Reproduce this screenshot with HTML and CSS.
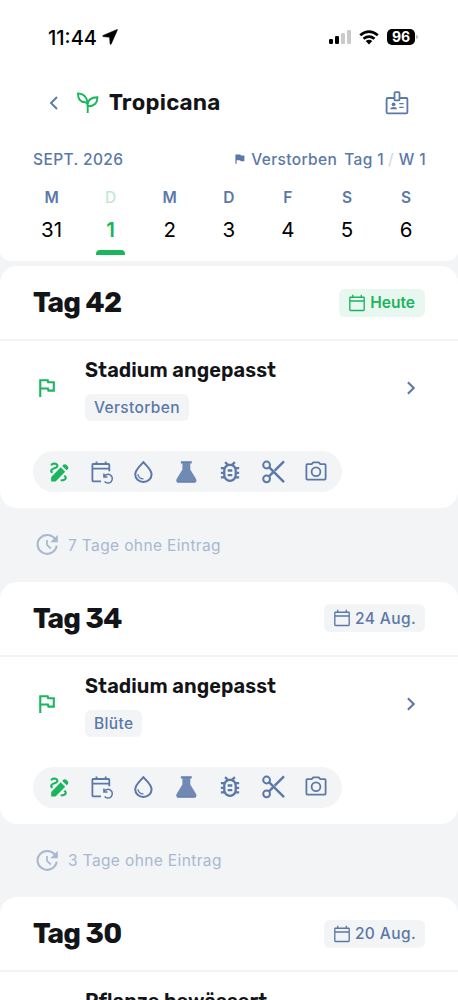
FILE: index.html
```
<!DOCTYPE html>
<html lang="de">
<head>
<meta charset="utf-8">
<meta name="viewport" content="width=device-width">
<title>Tropicana</title>
<link rel="stylesheet" href="styles.css">
</head>
<body>
<svg class="defs" aria-hidden="true">
  <symbol id="flag" viewBox="0 0 24 24"><path d="M12.36 6L12.76 8H18V14H14.64L14.24 12H7V6H12.36M14 4H5V21H7V14H12.6L13 16H20V6H14.4Z" fill="currentColor"/></symbol>
  <symbol id="right" viewBox="0 0 24 24"><path d="M8.9 6.2l5.8 5.8-5.8 5.8" fill="none" stroke="currentColor" stroke-width="2.1"/></symbol>
  <symbol id="calendar" viewBox="0 0 18 18"><path d="M2 3.2h13.6q.6 0 .6.6v12q0 .7-.7.7H2.5q-.7 0-.7-.7v-12q0-.6.6-.6M2 7h14M4.7.8v2.4M13.3.8v2.4" fill="none" stroke="currentColor" stroke-width="1.35"/></symbol>
  <symbol id="draw" viewBox="0 .5 23 23"><path fill="currentColor" d="M18.85 10.39l1.06-1.06c.78-.78.78-2.05 0-2.83L18.5 5.09c-.78-.78-2.05-.78-2.83 0l-1.06 1.06 4.24 4.24zM13.19 7.56L4 16.76V21h4.24l9.19-9.19-4.24-4.25zM19 17.5c0 2.19-2.54 3.5-5 3.5-.55 0-1-.45-1-1s.45-1 1-1c1.54 0 3-.73 3-1.5 0-.47-.48-.87-1.23-1.2l1.48-1.48c1.07.63 1.75 1.47 1.75 2.68zM4.58 13.35C3.61 12.79 3 12.06 3 11c0-1.8 1.89-2.63 3.56-3.36C7.59 7.18 9 6.56 9 6c0-.41-.78-1-2-1-1.26 0-1.8.61-1.83.64-.35.41-.98.46-1.4.12-.41-.34-.49-.95-.15-1.38C3.73 4.24 4.76 3 7 3s4 1.32 4 3c0 1.87-1.93 2.72-3.64 3.47C6.42 9.88 5 10.5 5 11c0 .31.43.6 1.07.86l-1.49 1.49z"/></symbol>
  <symbol id="schedule" viewBox="0 0 24 24"><g fill="none" stroke="currentColor"><path stroke-width="1.8" d="M11 21.3H3.2q-.8 0-.8-.8V4.8q0-.8.8-.8h15.3q.8 0 .8.8v6.4M2.6 8.7h16.7M6.5 1.5V4M15.7 1.5V4"/><path stroke-width="1.5" d="M14.1 16.5a4.4 4.4 0 1 1 .5 5.1M13.9 13.6v3.5h3.6"/></g></symbol>
  <symbol id="drop" viewBox="0 0 24 24"><g fill="none" stroke="currentColor"><path stroke-width="2" d="M10.4 2.2C7 6 2.2 10 2.2 14.3a8.2 7.6 0 0 0 16.4 0C18.6 10 13.8 6 10.4 2.2z"/><path stroke-width="1.4" d="M5 14.2q.4 4.4 5.5 4.7"/></g></symbol>
  <symbol id="flask" viewBox="0 0 24 24"><path fill="currentColor" fill-opacity=".86" d="M5.9 1.5h10.8v2.1h-1.4v6l5.8 9.5q1.3 3.2-1.6 3.4H3.2q-2.9-.2-1.6-3.4l5.8-9.5v-6H5.9z"/><path fill="none" stroke="currentColor" d="M5.9 2h10.8M2 22h18.6"/></symbol>
  <symbol id="bug" viewBox="1.5 1.8 21 21"><path fill="currentColor" fill-rule="evenodd" d="M20,8H17.19C16.74,7.2 16.12,6.5 15.37,6L17,4.41L15.59,3L13.42,5.17C12.96,5.06 12.5,5 12,5C11.5,5 11.05,5.06 10.59,5.17L8.41,3L7,4.41L8.62,6C7.87,6.5 7.26,7.21 6.81,8H4V10H6.09C6.03,10.33 6,10.66 6,11V12H4V14H6V15C6,15.34 6.03,15.67 6.09,16H4V18H6.81C8.47,20.87 12.14,21.84 15,20.18C15.91,19.66 16.67,18.9 17.19,18H20V16H17.91C17.97,15.67 18,15.34 18,15V14H20V12H18V11C18,10.66 17.97,10.33 17.91,10H20V8M16,15A4,4 0 0,1 12,19A4,4 0 0,1 8,15V11A4,4 0 0,1 12,7A4,4 0 0,1 16,11V15M14,10V12H10V10H14M10,14H14V16H10V14Z"/></symbol>
  <symbol id="cut" viewBox="0 0 24 24"><g fill="none" stroke="currentColor"><circle cx="5.6" cy="5" r="3.4" stroke-width="2"/><circle cx="5.6" cy="18.8" r="3.4" stroke-width="2"/><path stroke-width="2.4" d="M8 7.2l15 15M8 16.4l4-4M13.7 10.6L23 1.4"/></g></symbol>
  <symbol id="camera" viewBox="0 0 24 24"><g fill="none" stroke="currentColor" stroke-width="1.8"><path d="M3.4 4.2h4.3l1.6-1.9h5.4l1.6 1.9h4.3q1 0 1 1v13.4q0 1-1 1H3.4q-1 0-1-1V5.2q0-1 1-1z"/><circle cx="12" cy="11.8" r="4.4"/></g></symbol>
  <symbol id="update" viewBox="0 0 24 24"><g fill="none" stroke="currentColor"><path stroke-width="2.1" d="M20.4 6.5A9.6 9.4 0 1 0 21.7 12.7"/><path stroke-width="1.7" d="M12 6.9V12l3.8 3.5"/></g><path fill="currentColor" d="M22.8 1.7v7.5h-7.5z"/></symbol>
</svg>

<header class="top">
  <div class="status">
    <span class="clock">11:44</span>
    <svg class="location" viewBox="0 0 16 16"><path d="M15.3 1.2Q15.7.2 14.6.7L1 6.5Q0 7.2 1.1 7.6l6.5.6.5 6.7q.5 1.1 1.1 0z" stroke="#000" stroke-width=".6"/></svg>
    <svg class="signal" viewBox="0 0 23 16"><rect y="10" width="4" height="5" rx="1.2"/><rect x="6" y="7" width="4" height="8" rx="1.2"/><g fill="#cacaca"><rect x="12" y="4" width="4" height="11" rx="1.2"/><rect x="18" y="1" width="4" height="14" rx="1.2"/></g></svg>
    <svg class="wifi" viewBox="0 0 20 15"><g fill="none" stroke="#000" stroke-width="2.7"><path d="M1.2 5.2Q10-2.1 18.8 5.2M4.5 8.7q5.5-4.3 11 0"/></g><path d="M6.7 11q3.3-2.5 6.6 0L10 14.5z"/></svg>
    <span class="battery">96</span><i class="nub"></i>
  </div>
  <div class="title">
    <svg class="back" viewBox="0 0 12 16"><path d="M9 2L3 8l6 6" fill="none" stroke="currentColor" stroke-width="1.9"/></svg>
    <svg class="plant" viewBox="0 0 22 22"><g fill="none" stroke="currentColor" stroke-width="1.9"><path d="M10.7 21V12.8M10.6 12.6C10.8 7.7 15 5.4 20.4 5.3 20.6 11 17 14.4 10.8 14.3M10.4 9.7C9.4 4.5 6 1.8 1.1 1.4 .8 6.8 3.2 10.1 8.6 10.3M8.6 10.3q2.1.7 2.1 4"/></g></svg>
    <h1>Tropicana</h1>
    <svg class="badge" viewBox="0 0 24 24"><g fill="none" stroke="currentColor" stroke-width="1.8"><path d="M9.4 7H2.8q-1.2 0-1.2 1.2v13q0 1.2 1.2 1.2h18.4q1.2 0 1.2-1.2v-13Q22.4 7 21.2 7h-6.6"/><rect x="9.5" y="1.2" width="5" height="8.2" rx="1"/><path stroke-width="1.3" d="M14.3 12.7h4.3M14.3 16.3h4.3"/></g><circle cx="8.6" cy="13.3" r="1.9" fill="currentColor"/><path d="M5.2 18.2q.3-2.1 3.4-2.1t3.4 2.1z" fill="currentColor"/></svg>
  </div>
  <div class="period">
    <span class="month">SEPT. 2026</span>
    <svg class="miniflag" viewBox="0 0 10 10"><path fill="currentColor" d="M.4.5h5l.5 1h3.5v5.7H5.6l-.4-1H1.6v3.6H.4z"/></svg>
    <span class="stage">Verstorben</span><span class="day">Tag 1</span><span class="slash">/</span><span class="week">W 1</span>
  </div>
  <div class="days">
    <div><b>M</b><span>31</span></div>
    <div class="active"><b>D</b><span>1</span></div>
    <div><b>M</b><span>2</span></div>
    <div><b>D</b><span>3</span></div>
    <div><b>F</b><span>4</span></div>
    <div><b>S</b><span>5</span></div>
    <div><b>S</b><span>6</span></div>
  </div>
</header>

<main>
  <section class="card">
    <div class="head"><h2>Tag 42</h2><span class="date today"><svg><use href="#calendar"/></svg>Heute</span></div>
    <div class="entry"><svg class="flag"><use href="#flag"/></svg><div class="info"><h3>Stadium angepasst</h3><span class="tag">Verstorben</span></div><svg class="more"><use href="#right"/></svg></div>
    <div class="tools"><svg class="on"><use href="#draw"/></svg><svg><use href="#schedule"/></svg><svg><use href="#drop"/></svg><svg><use href="#flask"/></svg><svg><use href="#bug"/></svg><svg><use href="#cut"/></svg><svg><use href="#camera"/></svg></div>
  </section>
  <p class="gap"><svg><use href="#update"/></svg>7 Tage ohne Eintrag</p>
  <section class="card">
    <div class="head"><h2>Tag 34</h2><span class="date"><svg><use href="#calendar"/></svg>24 Aug.</span></div>
    <div class="entry"><svg class="flag"><use href="#flag"/></svg><div class="info"><h3>Stadium angepasst</h3><span class="tag">Blüte</span></div><svg class="more"><use href="#right"/></svg></div>
    <div class="tools"><svg class="on"><use href="#draw"/></svg><svg><use href="#schedule"/></svg><svg><use href="#drop"/></svg><svg><use href="#flask"/></svg><svg><use href="#bug"/></svg><svg><use href="#cut"/></svg><svg><use href="#camera"/></svg></div>
  </section>
  <p class="gap"><svg><use href="#update"/></svg>3 Tage ohne Eintrag</p>
  <section class="card">
    <div class="head"><h2>Tag 30</h2><span class="date"><svg><use href="#calendar"/></svg>20 Aug.</span></div>
    <div class="entry"><div class="info"><h3>Pflanze bewässert</h3></div></div>
  </section>
</main>
</body>
</html>
```
FILE: styles.css
```
* { box-sizing: border-box; }
html, body { height: 100%; }
body {
  margin: 0;
  overflow: hidden;
  background: #f2f4f6;
  color: #131417;
  font-family: Inter, "Liberation Sans", sans-serif;
}
h1, h2, h3, p { margin: 0; }
h1, h2, h3 { font-family: Rubik, Inter, sans-serif; white-space: nowrap; }
svg { display: block; flex: none; }
.defs { position: absolute; width: 0; height: 0; }

.top {
  height: 261px;
  background: #fff;
  border-radius: 0 0 10px 10px;
  color: #5b78a8;
}
.status {
  display: flex;
  align-items: center;
  height: 74px;
  padding-left: 48px;
  color: #000;
}
.clock { width: 54px; padding-top: 1px; font-size: 20px; font-weight: 500; }
.location { width: 16px; height: 16px; }
.signal { width: 23px; height: 16px; margin-left: 211px; }
.wifi { width: 20px; height: 15px; margin-left: 7px; }
.battery {
  width: 28px;
  height: 16px;
  margin-left: 8px;
  border-radius: 5px;
  background: #000;
  color: #fff;
  font-size: 14px;
  font-weight: 700;
  line-height: 16px;
  text-align: center;
}
.nub { width: 2px; height: 4px; margin-left: 1px; border-radius: 0 2px 2px 0; background: #bbb; }

.title { display: flex; align-items: center; height: 56px; padding: 0 49px 0 48px; }
.back { width: 12px; height: 16px; margin-top: 2px; }
.plant { width: 22px; height: 22px; margin: 2px 0 0 17px; color: #19b65e; }
.title h1 { flex: 1; margin: 0 0 0 10px; color: #131417; font-size: 22.5px; font-weight: 600; letter-spacing: .25px; }
.badge { width: 24px; height: 24px; margin-top: 2px; }

.period {
  display: flex;
  align-items: center;
  height: 30px;
  margin-top: 14px;
  padding: 0 32px 0 33px;
  font-size: 15.5px;
  font-weight: 500;
  white-space: nowrap;
}
.month { flex: 1; letter-spacing: .4px; }
.miniflag { width: 10px; height: 10px; margin-right: 6px; }
.stage { margin-right: 7px; letter-spacing: .35px; }
.day, .week { letter-spacing: .4px; }
.slash { margin: 0 5px 0 4px; color: #cbd5e4; font-weight: 400; }

.days { display: grid; grid-template-columns: repeat(7, 59.1px); height: 81px; padding: 15px 0 0 22px; }
.days div { display: flex; flex-direction: column; align-items: center; }
.days b { font-size: 15.5px; font-weight: 600; line-height: 18px; }
.days span { margin-top: 10px; color: #000; font-size: 20.5px; line-height: 25px; }
.days .active b { color: #bdeacf; font-weight: 500; }
.days .active span { color: #19b65e; font-weight: 600; }
.days .active::after { content: ""; width: 29px; height: 5px; margin-top: 8px; border-radius: 4px 4px 0 0; background: #19b65e; }

.card { height: 242.4px; background: #fff; border-radius: 17px; }
.card:first-child { margin-top: 5px; }
.head {
  display: flex;
  align-items: center;
  justify-content: space-between;
  height: 75px;
  padding: 0 33px;
  border-bottom: 2px solid #f2f3f5;
}
h2 { font-size: 28px; font-weight: 700; letter-spacing: -.7px; }
.date {
  display: flex;
  align-items: center;
  gap: 4px;
  height: 28px;
  padding: 0 9px 0 9px;
  border-radius: 6px;
  background: #f2f4f6;
  color: #5b78a8;
  font-size: 15.5px;
  font-weight: 500;
  letter-spacing: .4px;
  white-space: nowrap;
}
.date svg { width: 18px; height: 18px; }
.today { padding-right: 10px; background: #e8f7ef; color: #19b65e; font-weight: 600; letter-spacing: 0; }
.entry { display: flex; align-items: flex-start; padding: 0 35px 0 34px; height: 110px; }
.flag { width: 25px; height: 25px; margin-top: 34px; color: #19b65e; }
.info { flex: 1; padding: 15px 0 0 26px; }
h3 { font-size: 20px; font-weight: 600; line-height: 28px; letter-spacing: .07px; }
.tag {
  display: block;
  width: fit-content;
  height: 27px;
  margin-top: 10.3px;
  padding: 0 9px;
  border-radius: 6px;
  background: #f2f4f6;
  color: #5b78a8;
  font-size: 15.5px;
  font-weight: 500;
  line-height: 27px;
  letter-spacing: .35px;
}
.more { width: 24px; height: 24px; margin-top: 35px; color: #5b78a8; }
.tools {
  display: flex;
  align-items: center;
  gap: 18.8px;
  width: 309px;
  height: 41px;
  margin-left: 33px;
  padding-left: 14px;
  border-radius: 21px;
  background: #f2f4f6;
  color: #5b78a8;
}
.tools svg { width: 24px; height: 24px; }
.tools .on { color: #19b65e; }
.gap {
  display: flex;
  align-items: center;
  gap: 9px;
  height: 73.35px;
  padding-left: 35px;
  color: #a9b8d0;
  font-size: 15.5px;
  letter-spacing: .37px;
}
.gap svg { width: 24px; height: 24px; }
.card:last-child { height: 103.5px; overflow: hidden; border-radius: 17px 17px 0 0; }
.card:last-child .info { padding-left: 51px; }
```
